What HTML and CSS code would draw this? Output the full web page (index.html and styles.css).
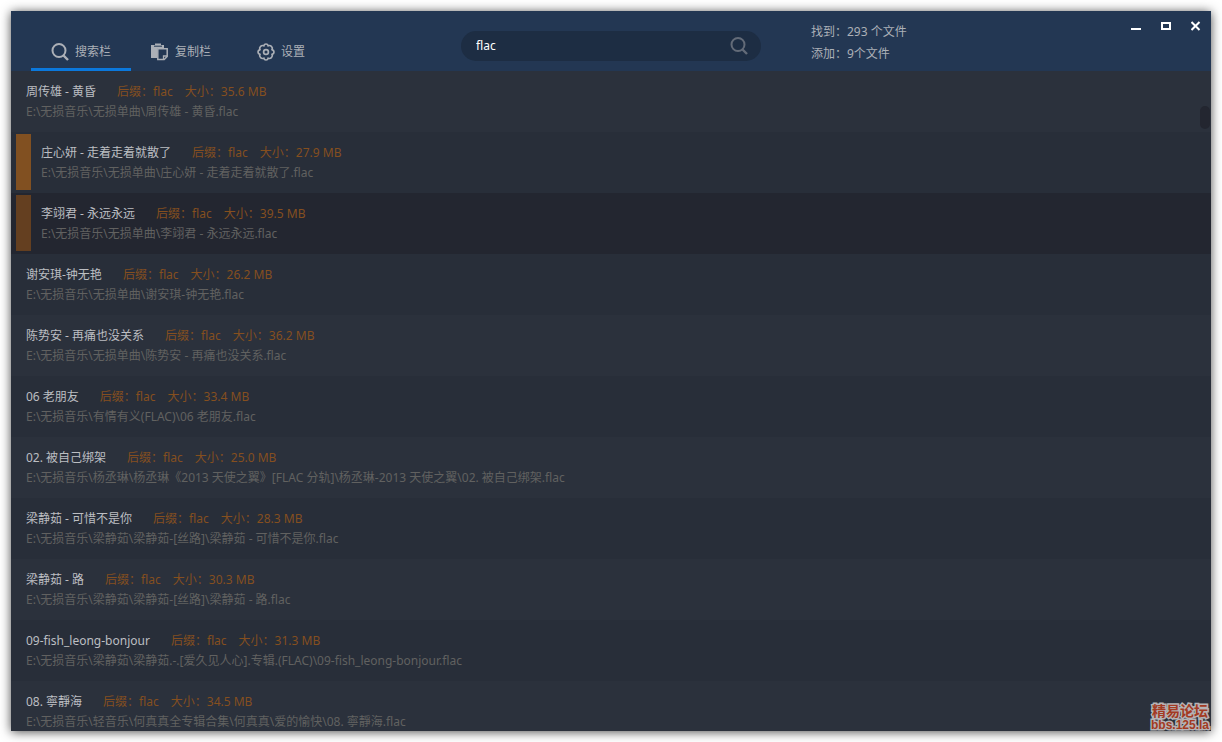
FILE: index.html
```html
<!DOCTYPE html>
<html lang="zh-CN">
<head>
    <meta charset="UTF-8">
    <meta name="viewport" content="width=device-width, initial-scale=1.0">
    <title>搜索栏</title>
    <link rel="stylesheet" href="styles.css">
</head>
<body>
    <div class="window">
        <header class="header">
            <nav class="tabs">
                <button type="button" class="tab active">
                    <svg class="icon" viewBox="0 0 18 18"><circle cx="8" cy="7.5" r="6.5" fill="none" stroke="currentColor" stroke-width="2"/><path d="M12.5 12.5L17 17" stroke="currentColor" stroke-width="2.4"/></svg>
                    搜索栏
                </button>
                <button type="button" class="tab">
                    <svg class="icon" viewBox="0 0 18 18"><path d="M0 2h4V0.5h6V2h3v3H6v10H0z" fill="currentColor"/><path d="M3 3.2h8" stroke="#233753" stroke-width="1"/><path d="M6.8 5.8h9.4v7.7l-3 3H6.8z" fill="#233753" stroke="currentColor" stroke-width="1.5"/><path d="M16 13h-3.5v4" fill="none" stroke="currentColor" stroke-width="1.3"/></svg>
                    复制栏
                </button>
                <button type="button" class="tab">
                    <svg class="icon" viewBox="0 0 18 18"><path d="M9 1 Q10.6 1 11.2 2.8 Q13 2 14.4 3.4 Q15.9 4.8 15.1 6.6 Q17 7.4 17 9 Q17 10.6 15.1 11.4 Q15.9 13.2 14.4 14.6 Q13 16 11.2 15.2 Q10.6 17 9 17 Q7.4 17 6.8 15.2 Q5 16 3.6 14.6 Q2.1 13.2 2.9 11.4 Q1 10.6 1 9 Q1 7.4 2.9 6.6 Q2.1 4.8 3.6 3.4 Q5 2 6.8 2.8 Q7.4 1 9 1z" fill="none" stroke="currentColor" stroke-width="1.7"/><circle cx="9" cy="9" r="2.4" fill="none" stroke="currentColor" stroke-width="1.7"/></svg>
                    设置
                </button>
            </nav>
            <form class="search">
                <input type="text" class="search-input" value="flac" aria-label="搜索">
                <button type="button" class="search-button" aria-label="搜索">
                    <svg class="icon" viewBox="0 0 18 18"><circle cx="8" cy="7.5" r="6.5" fill="none" stroke="currentColor" stroke-width="2"/><path d="M12.5 12.5L17 17" stroke="currentColor" stroke-width="2.4"/></svg>
                </button>
            </form>
            <div class="side">
                <div class="counts">
                    <div>找到：293 个文件</div>
                    <div>添加：9个文件</div>
                </div>
                <div class="controls">
                    <button type="button" class="control" aria-label="最小化"><svg viewBox="0 0 10 10"><path d="M0 8h10" stroke-width="2"/></svg></button>
                    <button type="button" class="control" aria-label="最大化"><svg viewBox="0 0 10 10"><path d="M1 2h8v6H1z" stroke-width="2"/></svg></button>
                    <button type="button" class="control" aria-label="关闭"><svg viewBox="0 0 10 10"><path d="M0.5 1l8 8M8.5 1l-8 8" stroke-width="2"/></svg></button>
                </div>
            </div>
        </header>

        <main class="content">
            <ul class="list">
                <li class="row">
                    <div class="title"><span class="name">周传雄 - 黄昏</span><span>后缀：flac</span><span>大小：35.6 MB</span></div>
                    <div class="path">E:\无损音乐\无损单曲\周传雄 - 黄昏.flac</div>
                </li>
                <li class="row added">
                    <div class="title"><span class="name">庄心妍 - 走着走着就散了</span><span>后缀：flac</span><span>大小：27.9 MB</span></div>
                    <div class="path">E:\无损音乐\无损单曲\庄心妍 - 走着走着就散了.flac</div>
                </li>
                <li class="row added current">
                    <div class="title"><span class="name">李翊君 - 永远永远</span><span>后缀：flac</span><span>大小：39.5 MB</span></div>
                    <div class="path">E:\无损音乐\无损单曲\李翊君 - 永远永远.flac</div>
                </li>
                <li class="row">
                    <div class="title"><span class="name">谢安琪-钟无艳</span><span>后缀：flac</span><span>大小：26.2 MB</span></div>
                    <div class="path">E:\无损音乐\无损单曲\谢安琪-钟无艳.flac</div>
                </li>
                <li class="row">
                    <div class="title"><span class="name">陈势安 - 再痛也没关系</span><span>后缀：flac</span><span>大小：36.2 MB</span></div>
                    <div class="path">E:\无损音乐\无损单曲\陈势安 - 再痛也没关系.flac</div>
                </li>
                <li class="row">
                    <div class="title"><span class="name">06 老朋友</span><span>后缀：flac</span><span>大小：33.4 MB</span></div>
                    <div class="path">E:\无损音乐\有情有义(FLAC)\06 老朋友.flac</div>
                </li>
                <li class="row">
                    <div class="title"><span class="name">02. 被自己绑架</span><span>后缀：flac</span><span>大小：25.0 MB</span></div>
                    <div class="path">E:\无损音乐\杨丞琳\杨丞琳《2013 天使之翼》[FLAC 分轨]\杨丞琳-2013 天使之翼\02. 被自己绑架.flac</div>
                </li>
                <li class="row">
                    <div class="title"><span class="name">梁静茹 - 可惜不是你</span><span>后缀：flac</span><span>大小：28.3 MB</span></div>
                    <div class="path">E:\无损音乐\梁静茹\梁静茹-[丝路]\梁静茹 - 可惜不是你.flac</div>
                </li>
                <li class="row">
                    <div class="title"><span class="name">梁静茹 - 路</span><span>后缀：flac</span><span>大小：30.3 MB</span></div>
                    <div class="path">E:\无损音乐\梁静茹\梁静茹-[丝路]\梁静茹 - 路.flac</div>
                </li>
                <li class="row">
                    <div class="title"><span class="name">09-fish_leong-bonjour</span><span>后缀：flac</span><span>大小：31.3 MB</span></div>
                    <div class="path">E:\无损音乐\梁静茹\梁静茹.-.[爱久见人心].专辑.(FLAC)\09-fish_leong-bonjour.flac</div>
                </li>
                <li class="row">
                    <div class="title"><span class="name">08. 寧靜海</span><span>后缀：flac</span><span>大小：34.5 MB</span></div>
                    <div class="path">E:\无损音乐\轻音乐\何真真全专辑合集\何真真\爱的愉快\08. 寧靜海.flac</div>
                </li>
            </ul>
            <div class="scroll-thumb"></div>
            <div class="watermark">
                <div class="watermark-name">精易论坛</div>
                <div class="watermark-url">bbs.125.la</div>
            </div>
        </main>
    </div>
</body>
</html>
```
FILE: styles.css
```css
* {
    box-sizing: border-box;
}
body {
    margin: 0;
    padding: 11px;
    height: 100vh;
    background: #fff;
    font-family: "Noto Sans", "Noto Sans CJK SC", sans-serif;
    font-size: 12px;
    line-height: 20px;
}
button, input {
    padding: 0;
    border: none;
    background: none;
    color: inherit;
    font: inherit;
}
button {
    cursor: pointer;
}
.window {
    display: flex;
    flex-direction: column;
    height: 100%;
    background: #2b313c;
    box-shadow: 0 1px 10px rgba(0, 0, 0, 0.7);
}
.header {
    display: grid;
    grid-template-columns: 1fr 300px 1fr;
    flex: none;
    height: 60px;
    background: #233753;
    color: #acb0b7;
}
.icon {
    width: 18px;
    height: 18px;
}

/* tabs */
.tabs {
    display: flex;
    align-items: flex-end;
    padding-left: 20px;
}
.tab {
    display: flex;
    align-items: center;
    justify-content: center;
    gap: 6px;
    width: 100px;
    height: 40px;
    border-top: 4px solid transparent;
    border-bottom: 3px solid transparent;
}
.tab.active {
    border-bottom-color: #0b78dc;
}

/* search box */
.search {
    display: flex;
    align-items: center;
    height: 30px;
    margin-top: 20px;
    padding: 0 13px 0 15px;
    border-radius: 15px;
    background: #1d2d43;
}
.search-input {
    flex: 1;
    min-width: 0;
    outline: none;
    color: #fff;
}
.search-button {
    display: flex;
    color: #636b78;
}

.side {
    display: flex;
    justify-content: space-between;
    padding-left: 50px;
}
.counts {
    padding-top: 10px;
    line-height: 22px;
}
.controls {
    display: flex;
}
.control {
    display: flex;
    align-items: center;
    justify-content: center;
    width: 30px;
    height: 30px;
}
.control svg {
    width: 10px;
    height: 10px;
    fill: none;
    stroke: #fff;
}

/* file list */
.content {
    position: relative;
    flex: 1;
    min-height: 0;
    overflow: hidden;
}
.list {
    margin: 0;
    padding: 0;
    list-style: none;
}
.row {
    position: relative;
    height: 61px;
    padding: 11px 15px 10px;
    background: #2b313c;
    white-space: nowrap;
}
.row:nth-child(even) {
    background: #282e39;
}
.row.added {
    padding-left: 30px;
}
.row.added::before {
    content: "";
    position: absolute;
    top: 2px;
    bottom: 3px;
    left: 5px;
    width: 15px;
    background: #815021;
}
.row.current {
    background: #232630;
}
.row.current::before {
    background: #643f20;
}
.title {
    display: flex;
    gap: 12px;
    color: #854f1f;
}
.name {
    margin-right: 9px;
    color: #bcbec2;
}
.path {
    color: #616160;
}
.scroll-thumb {
    position: absolute;
    top: 35px;
    right: 1px;
    width: 10px;
    height: 23px;
    border-radius: 5px;
    background: #232630;
}

.watermark {
    position: absolute;
    right: 2px;
    bottom: 0;
    color: #a33a22;
    font-weight: bold;
    text-align: center;
    -webkit-text-stroke: 3px #b5b3b5;
    paint-order: stroke fill;
}
.watermark-name {
    font-size: 14px;
    line-height: 17px;
}
.watermark-url {
    font-family: "Liberation Sans", sans-serif;
    font-size: 12px;
    line-height: 12px;
}
```
